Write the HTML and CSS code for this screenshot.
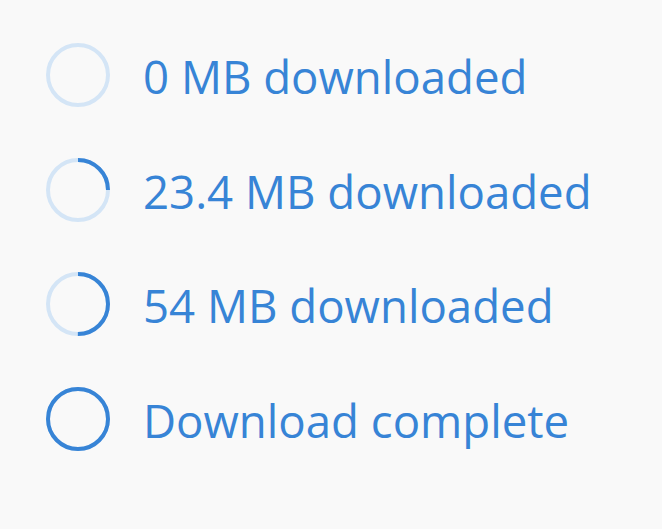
FILE: index.html
```html
<!DOCTYPE html>
<html>
<head>
<meta charset="utf-8">
<link rel="stylesheet" href="styles.css">
</head>
<body>
<ul class="list">
  <li class="row">
    <svg class="ring" viewBox="0 0 64 64" width="64" height="64"><circle class="track" cx="32" cy="32" r="30"/><circle class="bar" cx="32" cy="32" r="30" stroke-dasharray="0 188.5"/></svg>
    <span class="label">0 MB downloaded</span>
  </li>
  <li class="row">
    <svg class="ring" viewBox="0 0 64 64" width="64" height="64"><circle class="track" cx="32" cy="32" r="30"/><circle class="bar" cx="32" cy="32" r="30" stroke-dasharray="47.1 188.5"/></svg>
    <span class="label">23.4 MB downloaded</span>
  </li>
  <li class="row">
    <svg class="ring" viewBox="0 0 64 64" width="64" height="64"><circle class="track" cx="32" cy="32" r="30"/><circle class="bar" cx="32" cy="32" r="30" stroke-dasharray="94.25 188.5"/></svg>
    <span class="label">54 MB downloaded</span>
  </li>
  <li class="row">
    <svg class="ring" viewBox="0 0 64 64" width="64" height="64"><circle class="track" cx="32" cy="32" r="30"/><circle class="bar" cx="32" cy="32" r="30" stroke-dasharray="188.5 188.5"/></svg>
    <span class="label">Download complete</span>
  </li>
</ul>
</body>
</html>
```
FILE: styles.css
```css
html, body {
  margin: 0;
  padding: 0;
  background: #f9f9f9;
}
.list {
  list-style: none;
  margin: 0;
  padding: 43px 0 0 46px;
  display: flex;
  flex-direction: column;
  gap: 50.5px;
}
.row {
  display: flex;
  align-items: center;
  gap: 33px;
  height: 64px;
}
.ring {
  flex: none;
  transform: rotate(-90deg);
}
.track {
  fill: none;
  stroke: #d4e5f6;
  stroke-width: 4;
}
.bar {
  fill: none;
  stroke: #3784d6;
  stroke-width: 4;
}
.label {
  font-family: "Open Sans", sans-serif;
  font-size: 45.6px;
  color: #3784d6;
  line-height: 1;
  padding-top: 4px;
}
```
